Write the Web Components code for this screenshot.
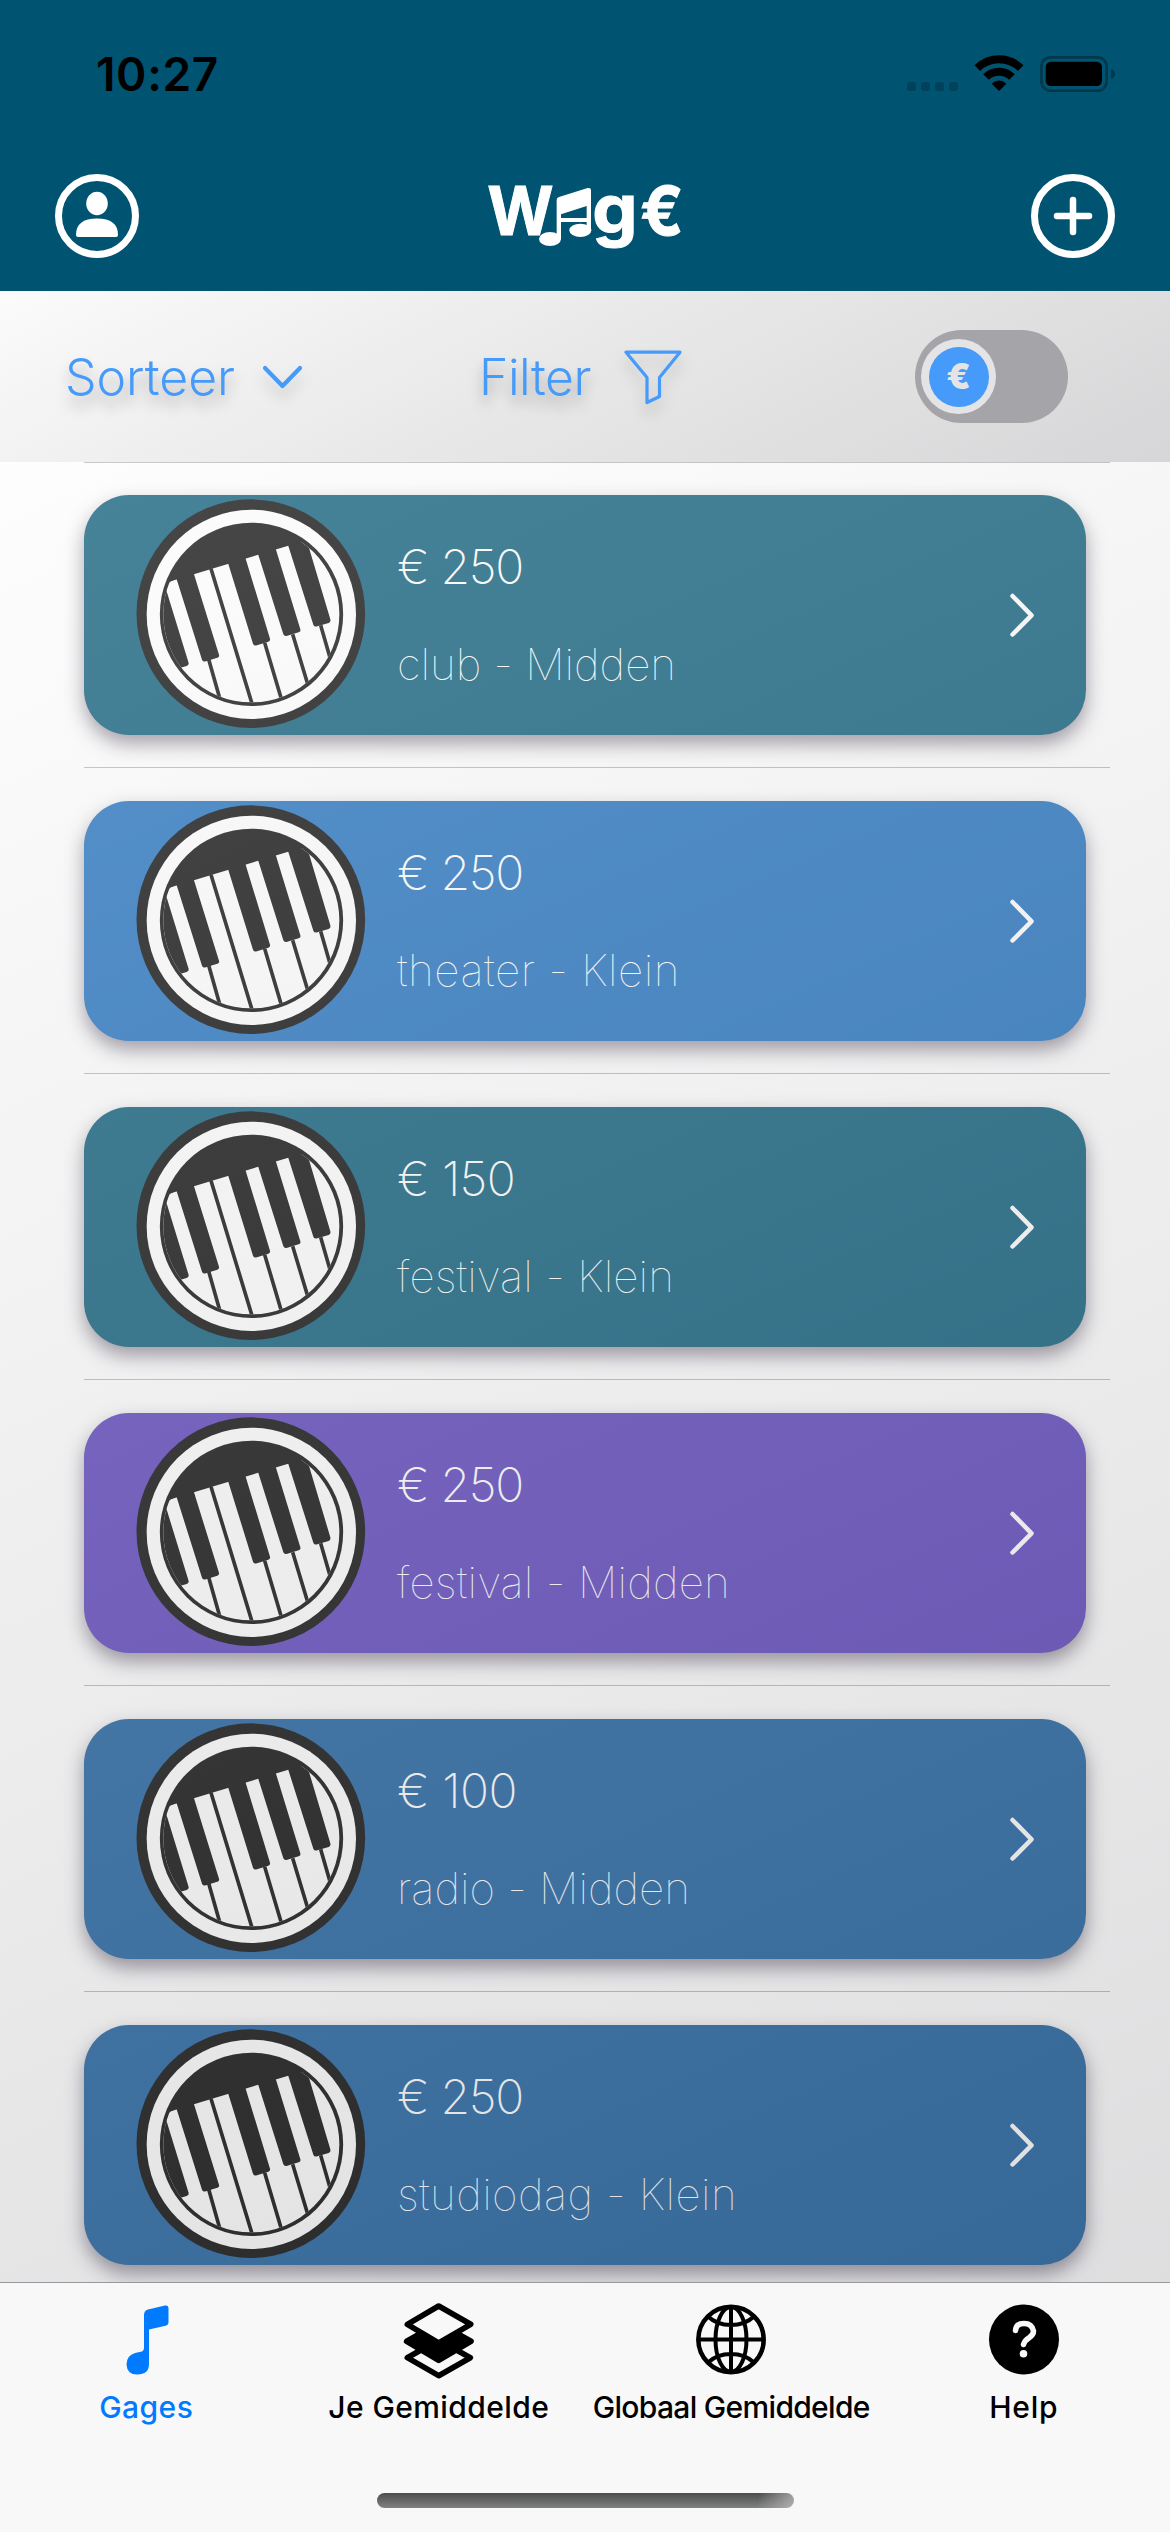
<!DOCTYPE html>
<html lang="nl">
<head>
<meta charset="utf-8">
<title>Wage</title>
<style>
html,body{margin:0;padding:0}
body{width:1170px;height:2532px;overflow:hidden;font-family:Inter,"Liberation Sans",sans-serif}
</style>
</head>
<body>
<wage-app></wage-app>
<script>
function define(name, html, setup){
  const t=document.createElement('template');
  t.innerHTML=html;
  customElements.define(name, class extends HTMLElement{
    connectedCallback(){
      if(this.shadowRoot) return;
      this.attachShadow({mode:'open'}).appendChild(t.content.cloneNode(true));
      if(setup) setup(this,this.shadowRoot);
    }
  });
}

/* One line of text, tracked so that it fills the given width. */
define('fit-text', `<style>:host{display:inline-block;white-space:pre;line-height:1}</style><span></span>`, (el,root)=>{
  const s=root.querySelector('span');
  s.textContent=el.getAttribute('text');
  const w=parseFloat(el.getAttribute('w'));
  if(w){
    const n=s.textContent.length;
    const cur=s.getBoundingClientRect().width;
    s.style.letterSpacing=((w-cur)/n).toFixed(3)+'px';
  }
});

define('status-bar', `<style>
:host{display:flex;height:148px;align-items:center;justify-content:space-between;padding:0 55px 0 96px;box-sizing:border-box;color:#000}
fit-text{font-size:46px;font-weight:600}
svg{display:block}
</style>
<fit-text text="10:27" w="123"></fit-text>
<svg width="230" height="60" viewBox="0 0 690 180">
<g transform="translate(45 -12)">
<g fill="#00425b"><rect x="21" y="126" width="27" height="27" rx="8"/><rect x="63" y="126" width="27" height="27" rx="8"/><rect x="105" y="126" width="27" height="27" rx="8"/><rect x="147" y="126" width="27" height="27" rx="8"/></g>
<g fill="none" stroke="#000" stroke-width="24"><path d="M232 84.500A93 93 0 0 1 362 84.500"/><path d="M258 111A56 56 0 0 1 336 111"/></g>
<path d="M275 131A31 31 0 0 1 319 131L297 153Z"/>
<rect x="424" y="52" width="196" height="100" rx="28" fill="none" stroke="#00384c" stroke-width="8"/>
<rect x="437" y="65" width="169" height="73" rx="16"/>
<path d="M633 86Q645 92 645 102T633 118Z" fill="#00384c"/>
</g></svg>`);

define('nav-bar', `<style>
:host{display:flex;height:136px;align-items:center;justify-content:space-between;padding:0 55px;box-sizing:border-box;color:#fff}
svg{display:block}
</style>
<svg width="84" height="84" viewBox="0 0 84 84"><circle cx="42" cy="42" r="38.500" fill="none" stroke="#fff" stroke-width="7"/><ellipse cx="42" cy="29.500" rx="10.800" ry="11.800" fill="#fff"/><path d="M21 61Q21 44.500 42 44.500T63 61Q63 63 61 63H23Q21 63 21 61Z" fill="#fff"/></svg>
<svg width="250" height="110" viewBox="0 0 750 330" fill="#fff" font-family="Inter,sans-serif" font-weight="700" font-size="203">
<text x="82" y="222" textLength="199" lengthAdjust="spacingAndGlyphs" stroke="#fff" stroke-width="3">W</text>
<path d="M290 117Q290 110 297 108L383 81Q393 79 393 88V210H380V183H303V235H290ZM303 160V171H380V135Z" fill-rule="evenodd"/>
<ellipse cx="270" cy="234" rx="33" ry="21"/><ellipse cx="361" cy="208" rx="33" ry="20"/>
<text x="397" y="217" textLength="136" lengthAdjust="spacingAndGlyphs" stroke="#fff" stroke-width="3">g</text>
<text x="541" y="221" textLength="130" lengthAdjust="spacingAndGlyphs" stroke="#fff" stroke-width="3">€</text>
</svg>
<svg width="84" height="84" viewBox="0 0 84 84" fill="none" stroke="#fff"><circle cx="42" cy="42" r="38.500" stroke-width="7"/><path d="M42 26V58M26 42H58" stroke-width="6.500" stroke-linecap="round"/></svg>`);

define('euro-switch', `<style>
:host{display:flex;width:153px;height:93px;border-radius:47px;background:#a5a4a9;box-sizing:border-box;padding:9px 6px;margin-right:102px}
.knob{width:75px;height:75px;border-radius:50%;background:#e4e4e6;display:flex;align-items:center;justify-content:center}
.in{width:60px;height:60px;border-radius:50%;background:#459afa;color:#e4e4e6;display:flex;align-items:center;justify-content:center;font-size:35px;line-height:1;font-weight:900}
</style><div class="knob"><div class="in">€</div></div>`);

define('filter-bar', `<style>
:host{display:flex;height:171px;align-items:center;box-sizing:border-box;padding-left:65px;background:linear-gradient(153deg,#fbfbfb,#e9e9e9 45%,#d6d6d8);color:#459afa;font-size:50px;font-weight:300}
fit-text{text-shadow:0 10px 14px rgba(0,0,0,.28)}
svg{display:block;overflow:visible;filter:drop-shadow(0 10px 7px rgba(0,0,0,.17))}
.a{margin-left:27px}.f{margin-left:175px}.b{margin-left:33px}
euro-switch{margin-left:auto}
</style>
<fit-text text="Sorteer" w="170"></fit-text>
<svg class="a" width="42" height="26" viewBox="0 0 42 26" fill="none" stroke="#459afa" stroke-width="4.200" stroke-linecap="round" stroke-linejoin="round"><path d="M3 4L20.500 22L38 4"/></svg>
<fit-text class="f" text="Filter" w="112"></fit-text>
<svg class="b" width="58" height="54" viewBox="0 0 58 54" fill="none" stroke="#459afa" stroke-width="3.200" stroke-linejoin="round"><path d="M2 2.200H56L35.500 27.500V46.500L23 52.500V27.500Z"/></svg>
<euro-switch></euro-switch>`);

define('piano-badge', `<style>:host{display:block;width:230px;height:230px}svg{display:block}</style>
<svg width="230" height="230" viewBox="33 27 690 690">
<clipPath id="c"><circle cx="379" cy="373" r="264"/></clipPath>
<circle cx="377.500" cy="371" r="343"/>
<circle cx="379" cy="373" r="314" fill="#fff"/>
<circle cx="379.500" cy="373" r="275"/>
<g clip-path="url(#c)">
<path d="M90 288L142 272L560 146L700 104V700H90Z" fill="#fff"/>
<path d="M63 100L123 298L191 519Q192 526 185 528L172 532L60 560Z"/>
<path d="M155 268L147 240L199 225L207 253L282 494Q284 501 277 503L243 514Q234 517 231 509Z"/>
<path d="M310 222L300 190L352 175L362 206L435 446Q437 453 430 455L396 466Q387 469 384 461Z"/>
<path d="M400 195L390 163L442 150L453 179L526 418Q528 425 521 427L487 437Q478 440 475 433Z"/>
<path d="M490 168L480 140L535 120L545 150L616 388Q618 396 611 399L577 409Q568 412 565 404Z"/>
<g fill="none" stroke="#000" stroke-width="11"><path d="M258 236L382 644M251 508L285 628M419 458L470 630M503 433L548 582M587 406L616 506"/></g>
<path d="M124 304Q126 276 145 271L120 262L108 300Z"/>
</g>
</svg>`);

define('gage-card', `<style>
:host{display:block;height:306px;box-sizing:border-box;padding:33px 0 32px;margin:0 60px 0 84px;border-bottom:1px solid #b6b6b8}
.card{height:240px;width:1002px;box-sizing:border-box;border-radius:45px;display:flex;align-items:center;padding:0 50px 0 52px;color:#fff;box-shadow:0 9px 19px rgba(25,15,40,.5)}
piano-badge{margin-bottom:2px}
.t{flex:1;display:flex;flex-direction:column;align-items:flex-start;margin-left:31px;gap:51px;font-weight:200}
.p{font-size:48px;margin-top:-1px}.k{font-size:44px;font-weight:100}
svg{display:block}
</style>
<div class="card"><piano-badge></piano-badge><div class="t"></div>
<svg width="28" height="48" viewBox="0 0 28 48" fill="none" stroke="#fff" stroke-width="4.500" stroke-linecap="round" stroke-linejoin="round"><path d="M4.500 5L23.500 24.300L4.500 43.500"/></svg></div>`, (el,root)=>{
  root.querySelector('.card').style.background=el.getAttribute('tone');
  const t=root.querySelector('.t');
  for(const c of ['p','k']){
    const f=document.createElement('fit-text');
    f.className=c;
    const [text,w]=el.getAttribute(c).split('|');
    f.setAttribute('text',text); f.setAttribute('w',w);
    t.appendChild(f);
  }
});

define('gage-list', `<style>
:host{display:block;position:relative;height:1820px;overflow:hidden;background:#fff}
.line{height:1px;margin:0 60px -1px 84px;background:#b6b6b8}
.veil{position:absolute;inset:0;opacity:.285;background:linear-gradient(156deg,#fafafa,#8b8b90);pointer-events:none}
</style><div class="line"></div><slot></slot><div class="veil"></div>`);

define('tab-item', `<style>
:host{display:flex;flex:1;flex-direction:column;align-items:center;font-size:30px;font-weight:500}
::slotted(svg){display:block;margin-bottom:4px}
</style><slot></slot><div class="l"></div>`, (el,root)=>{
  const f=document.createElement('fit-text');
  f.setAttribute('text',el.getAttribute('label'));
  f.setAttribute('w',el.getAttribute('w'));
  root.querySelector('.l').appendChild(f);
});

define('tab-bar', `<style>
:host{display:flex;flex-direction:column;height:250px;box-sizing:border-box;border-top:1px solid #99989c;background:#f8f8f8;padding-top:12px;color:#000}
.row{display:flex;height:130px}
.on{color:#007aff}
.home{width:417px;height:15px;border-radius:8px;margin:68px auto 0;background:linear-gradient(100deg,transparent 91%,rgba(190,190,190,.75)),linear-gradient(#4b4e4c,#818181)}
</style>
<div class="row">
<tab-item class="on" label="Gages" w="94"><svg width="90" height="90" viewBox="0 0 90 90" fill="currentColor"><path d="M43 20Q43 15.500 47 14.500L64 10.600Q67.500 10 67.500 13.500V27Q67.500 30 64.500 30.800L48 34.500V69Q48 79.500 36 79.500Q26 79.500 25.500 69.500Q25.500 60.500 34 58L41 56.500Q43 56 43 53Z"/></svg></tab-item>
<tab-item label="Je Gemiddelde" w="221"><svg width="90" height="90" viewBox="0 -15 270 270" stroke="#000" stroke-width="17" stroke-linejoin="round"><g transform="translate(4 -27)"><path d="M130 147L225 200L130 254L36 200Z" fill="#f8f8f8"/><path d="M130 97L227 151L130 208L34 151Z"/><path d="M130 45L226 100L130 156L36 100Z" fill="#f8f8f8"/></g></svg></tab-item>
<tab-item label="Globaal Gemiddelde" w="277"><svg width="90" height="90" viewBox="0 0 90 90" fill="none" stroke="#000" stroke-width="4"><circle cx="45" cy="44.500" r="32.700" stroke-width="4.500"/><ellipse cx="45" cy="44.500" rx="15.500" ry="32.500"/><path d="M45 12V77M12 44.500H78M22 21.500Q31 30 45 30T68 21.500M22 67.500Q31 59 45 59T68 67.500"/></svg></tab-item>
<tab-item label="Help" w="69"><svg width="90" height="90" viewBox="0 0 90 90"><circle cx="45" cy="44.500" r="35"/><path d="M36.500 35.500Q37 28.500 45 28.500T54.500 36Q54.500 40 50 42.800T44.500 49.500" fill="none" stroke="#f8f8f8" stroke-width="5.500" stroke-linecap="round"/><circle cx="44.500" cy="58.800" r="3.800" fill="#f8f8f8"/></svg></tab-item>
</div>
<div class="home"></div>`);

define('wage-app', `<style>
:host{display:flex;flex-direction:column;width:1170px;height:2532px}
header{background:#005472;height:291px}
</style>
<header><status-bar></status-bar><nav-bar></nav-bar></header>
<filter-bar></filter-bar>
<gage-list>
<gage-card tone="#005472" p="€ 250|126" k="club - Midden|279"></gage-card>
<gage-card tone="#176aba" p="€ 250|126" k="theater - Klein|283"></gage-card>
<gage-card tone="#005472" p="€ 150|118" k="festival - Klein|277"></gage-card>
<gage-card tone="#533ab8" p="€ 250|126" k="festival - Midden|333"></gage-card>
<gage-card tone="#13599a" p="€ 100|120" k="radio - Midden|293"></gage-card>
<gage-card tone="#13599a" p="€ 250|126" k="studiodag - Klein|340"></gage-card>
</gage-list>
<tab-bar></tab-bar>`);
</script>
</body>
</html>
